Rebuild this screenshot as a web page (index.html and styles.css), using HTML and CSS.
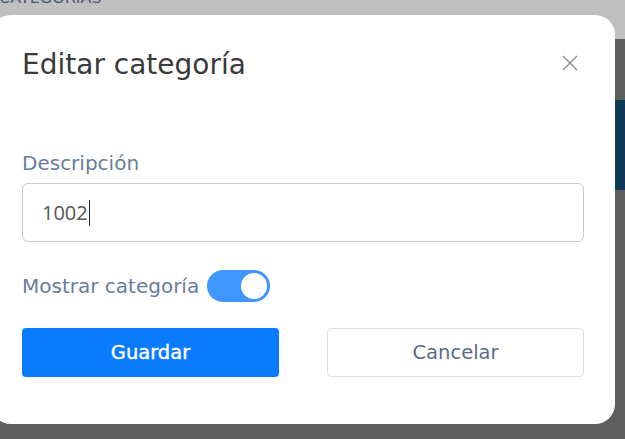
FILE: index.html
```html
<!DOCTYPE html>
<html lang="es">
<head>
<meta charset="utf-8">
<title>Editar categoría</title>
<link rel="stylesheet" href="styles.css">
</head>
<body>
<div class="page">
  <div class="topbar"><span class="page-title">CATEGORIAS</span></div>
  <div class="content">
    <div class="table-head"></div>
  </div>
</div>
<div class="modal">
  <div class="modal-header">
    <h2 class="modal-title">Editar categoría</h2>
    <button class="close" aria-label="Cerrar">
      <svg width="16" height="16" viewBox="0 0 16 16"><path d="M1 1L15 15M15 1L1 15" stroke="#8a8a8a" stroke-width="1.4" fill="none"/></svg>
    </button>
  </div>
  <div class="modal-body">
    <label class="label">Descripción</label>
    <div class="input"><span class="input-text">1002</span><span class="caret"></span></div>
    <div class="toggle-row">
      <span class="label">Mostrar categoría</span>
      <span class="toggle"><span class="knob"></span></span>
    </div>
    <div class="actions">
      <button class="btn btn-primary">Guardar</button>
      <button class="btn btn-secondary">Cancelar</button>
    </div>
  </div>
</div>
</body>
</html>
```
FILE: styles.css
```css
* { box-sizing: border-box; }
html, body { margin: 0; padding: 0; }
body {
  width: 625px;
  height: 439px;
  overflow: hidden;
  background: #5e5e5e;
  font-family: "DejaVu Sans", "Open Sans", sans-serif;
  position: relative;
}
.page { display: flex; flex-direction: column; height: 100%; }
.topbar {
  height: 39px;
  background: #c0c0c0;
  overflow: hidden;
  padding-top: 1px;
}
.page-title {
  display: block;
  margin-left: -1px;
  font-size: 16px;
  line-height: 16px;
  color: #4e5a70;
  transform: translateY(-11px);
}
.content { padding-top: 61px; }
.table-head { height: 90px; background: #0c3a57; }

.modal {
  position: absolute;
  left: -9px;
  top: 15px;
  width: 624px;
  height: 409px;
  background: #fff;
  border-radius: 20px;
  padding: 0 31px;
}
.modal-header {
  display: flex;
  justify-content: space-between;
  align-items: flex-start;
  padding-top: 30px;
  height: 97px;
}
.modal-title {
  margin: 0;
  font-weight: 400;
  font-size: 28px;
  line-height: 40px;
  color: #3a3a3a;
}
.close {
  border: 0;
  background: none;
  padding: 0;
  margin-top: 10px;
  margin-right: 6px;
  width: 16px;
  height: 16px;
}
.close svg { display: block; }
.modal-body { display: flex; flex-direction: column; }
.label {
  font-size: 20px;
  line-height: 26px;
  color: #6a7c9d;
}
.modal-body > .label { margin-top: 38px; }
.input {
  margin-top: 7px;
  height: 59px;
  border: 1px solid #c9c9c9;
  border-radius: 6px;
  display: flex;
  align-items: center;
  padding-left: 19px;
  font-family: "Open Sans", sans-serif;
  font-size: 20px;
  color: #555;
}
.caret { width: 1px; height: 26px; background: #222; margin-left: 1px; }
.toggle-row {
  display: flex;
  align-items: center;
  gap: 8px;
  margin-top: 28px;
}
.toggle {
  width: 63px;
  height: 32px;
  border-radius: 16px;
  background: #4096ff;
  display: flex;
  align-items: center;
  justify-content: flex-end;
  padding-right: 3px;
}
.knob {
  width: 26px;
  height: 26px;
  border-radius: 50%;
  background: #fff;
}
.actions {
  display: flex;
  gap: 48px;
  margin-top: 26px;
}
.btn {
  width: 257px;
  height: 49px;
  border-radius: 4px;
  font-family: "DejaVu Sans", sans-serif;
  font-size: 19.5px;
}
.btn-primary {
  background: #0a7bff;
  color: #fff;
  border: 0;
  -webkit-text-stroke: 0.4px #fff;
}
.btn-secondary { background: #fff; color: #5b6b86; border: 1px solid #dde0e8; }
```
